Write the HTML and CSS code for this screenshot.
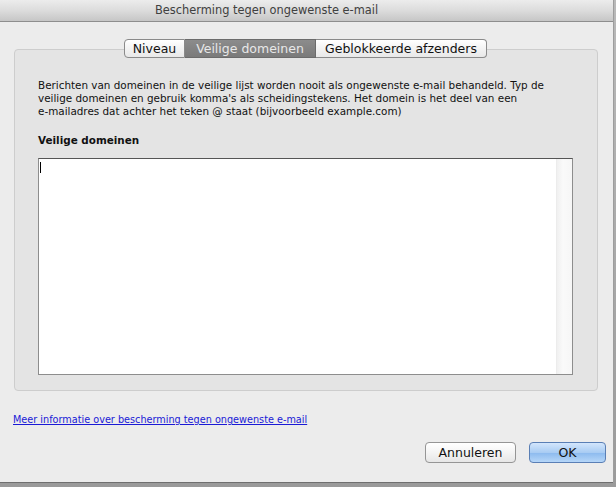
FILE: index.html
```html
<!DOCTYPE html>
<html>
<head>
<meta charset="utf-8">
<link rel="stylesheet" href="styles.css">
</head>
<body>
<div class="window">
  <div class="titlebar">Bescherming tegen ongewenste e-mail</div>
  <div class="content">
    <div class="tabbox">
      <div class="tabs">
        <div class="tab t1">Niveau</div>
        <div class="tab t2 selected">Veilige domeinen</div>
        <div class="tab t3">Geblokkeerde afzenders</div>
      </div>
      <div class="panel">
        <p class="desc">Berichten van domeinen in de veilige lijst worden nooit als ongewenste e-mail behandeld. Typ de<br>veilige domeinen en gebruik komma's als scheidingstekens. Het domein is het deel van een<br>e-mailadres dat achter het teken @ staat (bijvoorbeeld example.com)</p>
        <div class="label">Veilige domeinen</div>
        <div class="textarea">
          <div class="text"><span class="caret"></span></div>
          <div class="scrolltrack"></div>
        </div>
      </div>
    </div>
    <a class="link" href="#">Meer informatie over bescherming tegen ongewenste e-mail</a>
    <div class="buttons">
      <div class="btn">Annuleren</div>
      <div class="btn default">OK</div>
    </div>
  </div>
</div>
</body>
</html>
```

FILE: styles.css
```css
html, body {
  margin: 0;
  padding: 0;
}
body {
  width: 616px;
  height: 487px;
  background: linear-gradient(to bottom, #b9b9b9 0, #9a9a9a 100%);
  font-family: "DejaVu Sans", "Liberation Sans", sans-serif;
  overflow: hidden;
}
.window {
  width: 613px;
  height: 482px;
  background: #ececec;
  display: flex;
  flex-direction: column;
  box-shadow: 0 1px 0 #6f6f6f, 1px 0 0 #9d9d9d;
}
.titlebar {
  height: 21px;
  line-height: 20px;
  border-bottom: 1px solid #8e8e8e;
  background: linear-gradient(to bottom, #ececec 0, #dcdcdc 50%, #c6c6c6 100%);
  text-align: center;
  font-size: 11.4px;
  color: #404040;
  padding-right: 80px;
}
.content {
  flex: 1;
  display: flex;
  flex-direction: column;
  padding: 17px 15px 0 14px;
}
.tabbox {
  position: relative;
  padding-top: 10px;
}
.tabs {
  position: absolute;
  top: 0;
  left: 110px;
  display: flex;
  z-index: 1;
}
.tab {
  height: 17px;
  line-height: 17px;
  font-size: 12.5px;
  color: #111;
  text-align: center;
  background: linear-gradient(to bottom, #ffffff 0, #f3f3f3 50%, #e8e8e8 100%);
  border: 1px solid #8a8a8a;
  border-left: none;
}
.t1 {
  width: 59px;
  border-left: 1px solid #8a8a8a;
  border-radius: 4px 0 0 4px;
}
.t2 {
  width: 130px;
}
.t3 {
  width: 170px;
  border-radius: 0 4px 4px 0;
}
.tab.selected {
  background: linear-gradient(to bottom, #8c8c8c 0, #7a7a7a 100%);
  color: #e8e8e8;
  border-color: #6b6b6b;
}
.panel {
  box-sizing: border-box;
  background: #e4e4e4;
  border: 1px solid #cdcdcd;
  border-radius: 4px;
  height: 342px;
  padding: 29px 24px 0 23px;
}
.desc {
  margin: 0;
  font-size: 10.4px;
  line-height: 13px;
  color: #111;
  white-space: nowrap;
}
.label {
  margin-top: 16px;
  font-size: 10.4px;
  font-weight: bold;
  color: #111;
}
.textarea {
  margin-top: 12px;
  height: 215px;
  background: #fff;
  border: 1px solid #8d8d8d;
  border-top-color: #555;
  display: flex;
}
.text {
  flex: 1;
  padding: 3px 1px;
}
.caret {
  display: block;
  width: 1px;
  height: 11px;
  background: #000;
}
.scrolltrack {
  width: 15px;
  background: linear-gradient(to right, #f0f0f0 0, #fafafa 40%, #f6f6f6 100%);
  border-left: 1px solid #ececec;
}
.link {
  margin-top: 23px;
  margin-left: -1px;
  align-self: flex-start;
  font-size: 9.7px;
  color: #1a1ad6;
  text-decoration: underline;
}
.buttons {
  margin-top: 17px;
  display: flex;
  justify-content: flex-end;
  gap: 13px;
  margin-right: -8px;
}
.btn {
  height: 19px;
  line-height: 19px;
  font-size: 12.5px;
  color: #111;
  text-align: center;
  border: 1px solid #959595;
  border-radius: 4px;
  background: linear-gradient(to bottom, #ffffff 0, #f4f4f4 50%, #e6e6e6 100%);
  width: 89px;
}
.btn.default {
  width: 75px;
  border-color: #5a7fb5;
  background: linear-gradient(to bottom, #d3e6fc 0, #a9ccf3 50%, #8fbcef 55%, #b5d6f8 100%);
}
```
